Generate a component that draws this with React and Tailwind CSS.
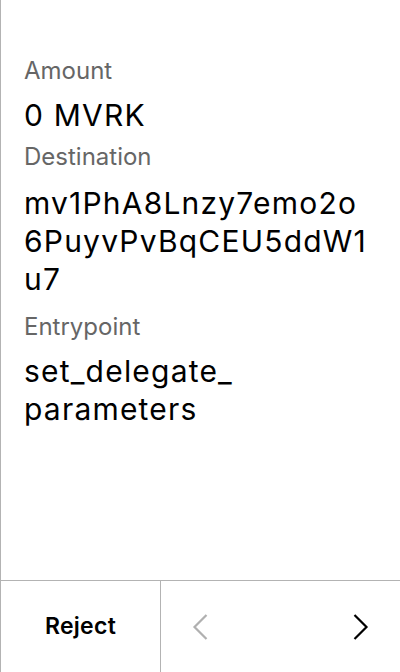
import React from "react";

const Label = ({ children, className = "" }) => (
  <div className={`text-[24px] leading-[32px] text-[#666666] ${className}`}>
    {children}
  </div>
);

const Value = ({ children, className = "" }) => (
  <div
    className={`text-[30px] leading-[38px] tracking-[1.2px] text-black ${className}`}
  >
    {children}
  </div>
);

const Chevron = ({ dir, color }) => (
  <svg width="16" height="26" viewBox="0 0 16 26" fill="none">
    <path
      d={dir === "left" ? "M14.5 1 L2.5 13 L14.5 25" : "M1.5 1 L13.5 13 L1.5 25"}
      stroke={color}
      strokeWidth="2.2"
    />
  </svg>
);

export default function App() {
  return (
    <div
      className="w-[400px] h-[672px] flex flex-col bg-white border-l border-[#b3b3b3] overflow-hidden"
      style={{ fontFamily: "Inter, 'Liberation Sans', sans-serif" }}
    >
      <div className="flex-1 pt-[55px] pl-[23px] pr-[24px]">
        <Label>Amount</Label>
        <Value className="mt-[9px]">0 MVRK</Value>

        <Label className="mt-[7px]">Destination</Label>
        <Value className="mt-[11px] break-all">
          mv1PhA8Lnzy7emo2o6PuyvPvBqCEU5ddW1u7
        </Value>

        <Label className="mt-[13px]">Entrypoint</Label>
        <Value className="mt-[9px]">
          set_delegate_<wbr />parameters
        </Value>
      </div>

      <div className="h-[92px] flex border-t border-[#b3b3b3]">
        <button className="w-[160px] border-r border-[#b3b3b3] flex items-center justify-center text-[23px] font-semibold tracking-[0.3px] text-black">
          Reject
        </button>
        <div className="flex-1 flex items-center justify-between px-[31px]">
          <Chevron dir="left" color="#b0b0b0" />
          <Chevron dir="right" color="#000000" />
        </div>
      </div>
    </div>
  );
}
